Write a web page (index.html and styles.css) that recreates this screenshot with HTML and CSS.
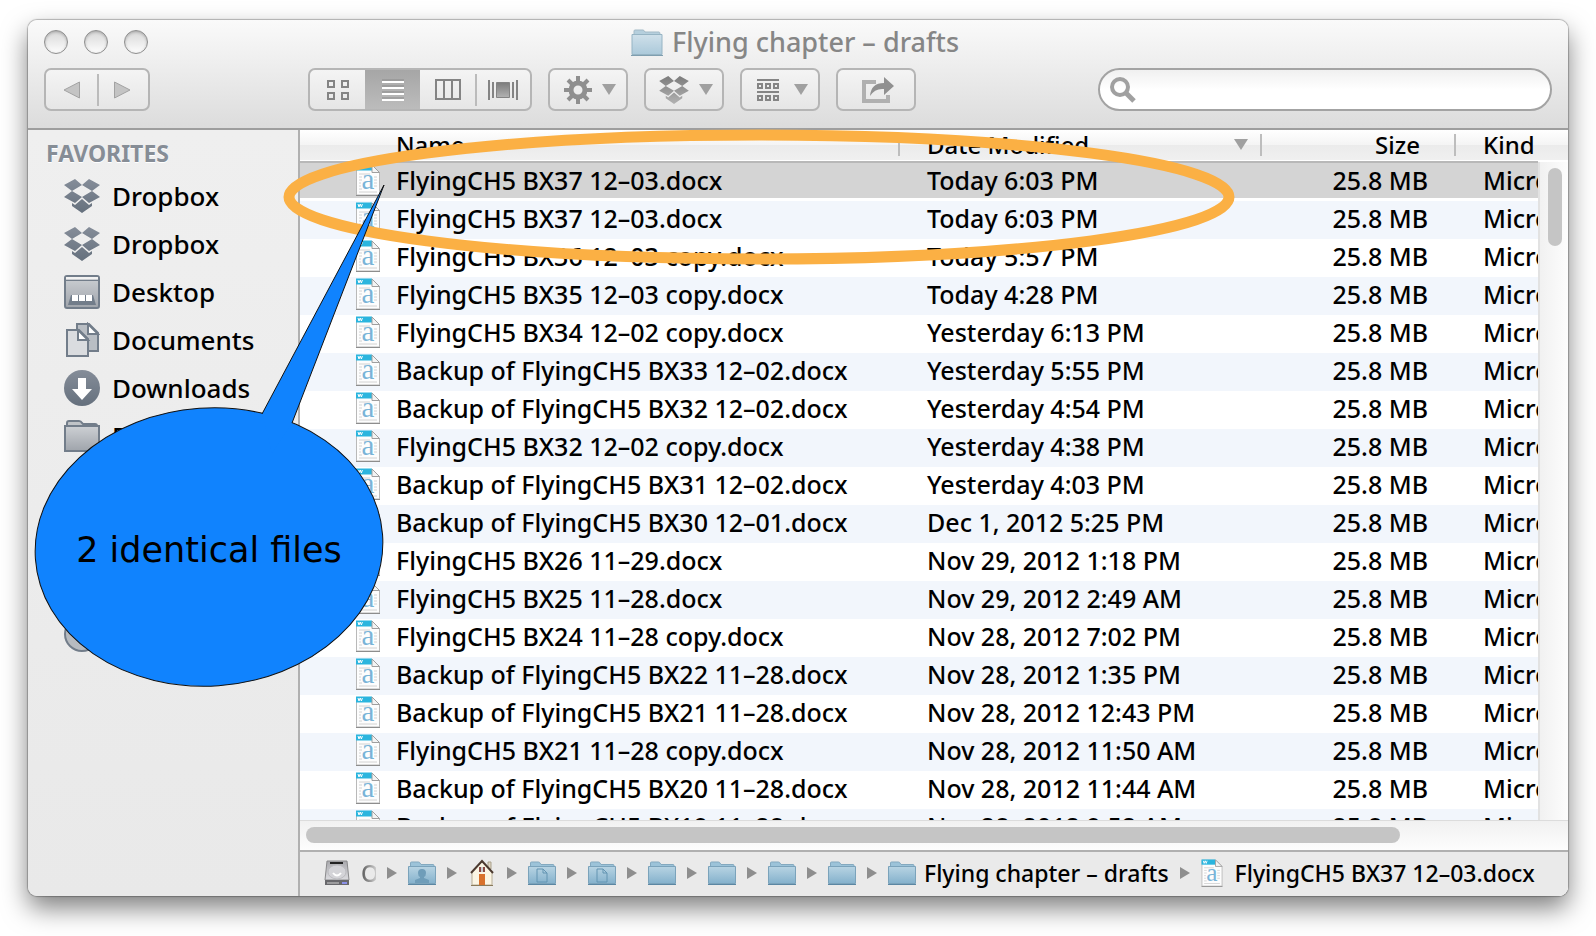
FILE: index.html
```html
<!DOCTYPE html>
<html lang="en">
<head>
    <meta charset="utf-8">
    <title>Flying chapter – drafts</title>
    <link rel="stylesheet" href="styles.css">
</head>
<body>
<svg class="defs" aria-hidden="true">
    <defs>
        <linearGradient id="g-folder" x1="0" y1="0" x2="0" y2="1">
            <stop offset="0" stop-color="#b8d4e3"/><stop offset="1" stop-color="#84b1cc"/>
        </linearGradient>
        <linearGradient id="g-pale" x1="0" y1="0" x2="0" y2="1">
            <stop offset="0" stop-color="#cfe0ea"/><stop offset="1" stop-color="#abc9da"/>
        </linearGradient>
        <linearGradient id="g-slate" x1="0" y1="0" x2="0" y2="1">
            <stop offset="0" stop-color="#858d99"/><stop offset="1" stop-color="#65707d"/>
        </linearGradient>
        <linearGradient id="g-silver" x1="0" y1="0" x2="0" y2="1">
            <stop offset="0" stop-color="#cdd0d4"/><stop offset="1" stop-color="#9fa4ab"/>
        </linearGradient>
        <linearGradient id="g-tool" x1="0" y1="0" x2="0" y2="1">
            <stop offset="0" stop-color="#7c7c7c"/><stop offset="1" stop-color="#b2b2b2"/>
        </linearGradient>
        <linearGradient id="g-disk" x1="0" y1="0" x2="0" y2="1">
            <stop offset="0" stop-color="#a9a9ad"/><stop offset="1" stop-color="#dcdce0"/>
        </linearGradient>
    </defs>
    <symbol id="doc" viewBox="0 0 24 32">
        <path d="M.5 1.500h16l7 7v22.500h-23z" fill="#fdfdfd" stroke="#b9b9b9"/>
        <path d="M0 31.500h24" stroke="#8d8d8d"/>
        <path d="M0 .5h16v6H0z" fill="#2bb5de"/>
        <path d="M2 2l1 3 1.200-3 1.200 3 1-3" fill="none" stroke="#fff"/>
        <path d="M16 1v7.500h7.500z" fill="#f4f4f4" stroke="#9f9f9f"/>
        <path d="M3 10h11M3 13h3M18 13h3M3 16h3M18 16h3M3 19h2M18 19h3M3 22h2M18 22h3M3 25h3M3 28h18" stroke="#d2d2d2"/>
        <text x="12" y="25" text-anchor="middle" class="doc-letter">a</text>
    </symbol>
    <symbol id="folder" viewBox="0 0 28 24">
        <path d="M2.500 6V2q0-1 1-1h7q1 0 1.500 1l1 1.500h12q1 0 1 1V7z" fill="#9cc3d9" stroke="#84a9bf"/>
        <path d="M.5 5.500h27v17h-27z" fill="url(#g-folder)" stroke="#7ba3bb"/>
        <path d="M0 23.500h28" stroke="#5b87a3"/>
    </symbol>
    <symbol id="dropbox" viewBox="0 0 36 34">
        <path d="M11 0L18 6 8 12 0 6zM25 0l11 6-8 6-10-6zM8 12l10 6-7 6-11-6zM28 12l8 6-11 6-7-6zM18 20l7 6 3-2v3l-10 7-10-7v-3l3 2z"/>
    </symbol>
    <symbol id="arrow" viewBox="0 0 10 12"><path d="M0 0l10 6-10 6z" fill="#8e8e8e"/></symbol>
    <symbol id="down" viewBox="0 0 14 11"><path d="M0 0h14L7 11z" fill="#a0a0a0"/></symbol>
</svg>

<div class="window">
    <header class="top">
        <div class="titlebar">
            <div class="lights">
                <button class="light" aria-label="Close"></button>
                <button class="light" aria-label="Minimize"></button>
                <button class="light" aria-label="Zoom"></button>
            </div>
            <h1 class="title"><svg class="title-icon" viewBox="0 0 32 27"><path d="M3 6V2q0-1 1-1h8q1 0 2 2h14q1 0 1 2v2z" fill="#b5cfdd" stroke="#a3bac7"/><path d="M1 5.500h30v20H1z" fill="url(#g-pale)" stroke="#96b4c4"/><path d="M0 26.500h32" stroke="#7f9eaf"/></svg>Flying chapter – drafts</h1>
        </div>
        <div class="toolbar">
            <div class="group nav">
                <button aria-label="Back"><svg width="17" height="18"><path d="M16.500 1v16L1 9z" fill="#c4c4c4" stroke="#a2a2a2"/></svg></button>
                <button aria-label="Forward"><svg width="17" height="18"><path d="M.5 1v16L16 9z" fill="#c4c4c4" stroke="#a2a2a2"/></svg></button>
            </div>
            <div class="group views">
                <button aria-label="Icon view"><svg width="24" height="22" fill="none" stroke="#848484" stroke-width="2"><path d="M2 2h6v6H2zM16 2h6v6h-6zM2 14h6v6H2zM16 14h6v6h-6z"/></svg></button>
                <button class="on" aria-label="List view"><svg width="24" height="22" stroke="#fff" stroke-width="2"><path d="M1 3h22M1 9h22M1 15h22M1 21h22"/><path d="M1 1h22M1 7h22M1 13h22M1 19h22" stroke="#8b8b8b" stroke-width="1"/></svg></button>
                <button aria-label="Column view"><svg width="28" height="22" fill="none" stroke="#848484" stroke-width="2"><path d="M2 1h24v19H2zM10 1v19M18 1v19"/></svg></button>
                <button aria-label="Cover Flow"><svg width="30" height="22"><path d="M1 1v20M5 3v16M25 3v16M29 1v20" stroke="#848484" stroke-width="2"/><path d="M8.500 3.500h13v15h-13z" fill="url(#g-tool)" stroke="#848484"/></svg></button>
            </div>
            <button class="tool" aria-label="Action">
                <svg width="28" height="28" viewBox="-14 -14 28 28" fill="none" stroke="#8f8f8f"><circle r="7" stroke-width="5"/><path d="M0-14V-8M0 8v6M-14 0h6M8 0h6M-10-10l4 4M6 6l4 4M-10 10l4-4M6-6l4-4" stroke-width="4"/></svg>
                <svg width="14" height="11"><use href="#down"/></svg>
            </button>
            <button class="tool" aria-label="Dropbox">
                <svg width="30" height="28" fill="url(#g-tool)"><use href="#dropbox"/></svg>
                <svg width="14" height="11"><use href="#down"/></svg>
            </button>
            <button class="tool arrange" aria-label="Arrange">
                <svg width="24" height="24" fill="none" stroke="#858585" stroke-width="2"><path d="M1 2h22M1 14h22"/><path d="M2 6h4v4H2zM10 6h4v4h-4zM18 6h4v4h-4zM2 18h4v4H2zM10 18h4v4h-4zM18 18h4v4h-4z"/></svg>
                <svg width="14" height="11"><use href="#down"/></svg>
            </button>
            <button class="tool share" aria-label="Share">
                <svg width="32" height="26"><path d="M14 5H2v19h24v-6" fill="none" stroke="#b0b0b0" stroke-width="4"/><path d="M22 0l10 9-10 9v-6q-9-1-14 7Q9 6 22 6z" fill="#909090"/></svg>
            </button>
            <label class="search">
                <svg width="26" height="26" fill="none" stroke="#a0a0a0"><circle cx="10" cy="10" r="8" stroke-width="4"/><path d="M16 16l8 8" stroke-width="5"/></svg>
                <input type="search" aria-label="Search">
            </label>
        </div>
    </header>

    <div class="content">
        <nav class="sidebar">
            <h2>FAVORITES</h2>
            <ul>
                <li><a href="#"><svg class="side-icon" fill="url(#g-slate)"><use href="#dropbox"/></svg>Dropbox</a></li>
                <li><a href="#"><svg class="side-icon" fill="url(#g-slate)"><use href="#dropbox"/></svg>Dropbox</a></li>
                <li><a href="#"><svg class="side-icon" viewBox="0 0 36 34"><rect x="1" y="1" width="34" height="32" rx="2" fill="url(#g-silver)" stroke="#727d8a" stroke-width="2"/><path d="M2 3h32" stroke="#f2f2f2" stroke-width="2"/><path d="M2 5.500h32" stroke="#727d8a"/><path d="M7 20h22l3 10H4z" fill="#727d8a"/><path d="M8 20h6v6H8zM15 20h6v6h-6zM22 20h6v6h-6z" fill="#fff"/></svg>Desktop</a></li>
                <li><a href="#"><svg class="side-icon" viewBox="0 0 36 34"><path d="M13 1h12l9 9v18H13z" fill="#b9bec4" stroke="#727d8a" stroke-width="2"/><path d="M24 1v10h10z" fill="#fff" stroke="#727d8a" stroke-width="2"/><path d="M3 7h12l9 9v17H3z" fill="#dadcdf" stroke="#727d8a" stroke-width="2"/><path d="M14 7v10h10z" fill="#fff" stroke="#727d8a" stroke-width="2"/></svg>Documents</a></li>
                <li><a href="#"><svg class="side-icon" viewBox="0 0 36 36"><circle cx="18" cy="18" r="18" fill="url(#g-slate)"/><path d="M14 8h8v11h6L18 30 8 19h6z" fill="#fff"/></svg>Downloads</a></li>
                <li><a href="#"><svg class="side-icon" viewBox="0 0 36 34"><path d="M3 8V4q0-2 2-2h10q2 0 3 2l1 1h12q2 0 2 2v3z" fill="#c0c4c8" stroke="#727d8a" stroke-width="2"/><path d="M1 7h34v25H1z" fill="url(#g-silver)" stroke="#727d8a" stroke-width="2"/></svg>P</a></li>
                <li class="disc"><svg class="side-icon" viewBox="0 0 36 36"><circle cx="18" cy="18" r="17" fill="#b7bbc0" stroke="#727d8a" stroke-width="2"/></svg></li>
            </ul>
        </nav>

        <main class="main">
            <div class="files">
                <div class="list">
                    <table>
                        <colgroup><col><col class="c-date"><col class="c-size"><col class="c-kind"></colgroup>
                        <thead>
                            <tr>
                                <th>Name</th>
                                <th><span class="sorted">Date Modified<svg width="14" height="11"><use href="#down"/></svg></span></th>
                                <th class="size">Size</th>
                                <th>Kind</th>
                            </tr>
                        </thead>
                        <tbody id="rows"></tbody>
                    </table>
                </div>
                <div class="vscroll"><div class="vthumb"></div></div>
            </div>
            <div class="hscroll"><div class="hthumb"></div></div>
            <footer class="path">
                <svg width="26" height="26"><path d="M3 1h20l2 19H1z" fill="url(#g-disk)" stroke="#8a8a8c"/><path d="M1 20h24v5H1z" fill="#68686c"/><path d="M3 23h12" stroke="#d0d0d0"/><path d="M18 23h5" stroke="#8a90e8" stroke-width="2"/><path d="M6 3h13" stroke="#222" stroke-width="2"/><ellipse cx="13" cy="12" rx="9" ry="7" fill="#d4d4d8" stroke="#bcbcc0"/><path d="M9 13q4 5 8 0" fill="none" stroke="#fff" stroke-width="2"/></svg>
                <span class="disk-name">O</span>
                <svg class="arrow"><use href="#arrow"/></svg>
                <svg class="crumb"><use href="#folder"/><path d="M14 8q4 0 4 4 0 3-2 4v1l5 2v3H7v-3l5-2v-1q-2-1-2-4 0-4 4-4z" fill="#6f9db9"/></svg>
                <svg class="arrow"><use href="#arrow"/></svg>
                <svg class="home" width="28" height="28"><path d="M20 3h3v7h-3z" fill="#ddd5c2" stroke="#aaa18c"/><path d="M4 13L14 3l10 10v13H4z" fill="#fbf5e4" stroke="#b8ae98"/><path d="M3 14L14 2l11 12" fill="none" stroke="#4b3a30" stroke-width="2"/><path d="M11 15h6v11h-6z" fill="#d8712c"/><path d="M11 8h6v5h-6z" fill="#8a4a44"/><path d="M13 8h2v5h-2z" fill="#c8ccd0"/><path d="M3 26.500h22" stroke="#8a7a5a"/></svg>
                <svg class="arrow"><use href="#arrow"/></svg>
                <svg class="crumb"><use href="#folder"/><path d="M9 8h6l4 4v9H9zM15 8v4h4" fill="none" stroke="#6394b2"/></svg>
                <svg class="arrow"><use href="#arrow"/></svg>
                <svg class="crumb"><use href="#folder"/><path d="M9 8h6l4 4v9H9zM15 8v4h4" fill="none" stroke="#6394b2"/></svg>
                <svg class="arrow"><use href="#arrow"/></svg>
                <svg class="crumb"><use href="#folder"/></svg>
                <svg class="arrow"><use href="#arrow"/></svg>
                <svg class="crumb"><use href="#folder"/></svg>
                <svg class="arrow"><use href="#arrow"/></svg>
                <svg class="crumb"><use href="#folder"/></svg>
                <svg class="arrow"><use href="#arrow"/></svg>
                <svg class="crumb"><use href="#folder"/></svg>
                <svg class="arrow"><use href="#arrow"/></svg>
                <span class="current"><svg class="crumb"><use href="#folder"/></svg>Flying chapter – drafts</span>
                <svg class="arrow"><use href="#arrow"/></svg>
                <span class="current current-file"><svg class="crumb-doc"><use href="#doc"/></svg>FlyingCH5 BX37 12–03.docx</span>
            </footer>
        </main>
    </div>
</div>

<!-- annotations drawn over the window -->
<svg class="notes">
    <ellipse cx="759" cy="197" rx="470" ry="62" fill="none" stroke="#fbb044" stroke-width="11"/>
    <ellipse cx="209" cy="547" rx="174" ry="139" fill="#1083fe" stroke="#111" transform="rotate(-4 209 547)"/>
    <path d="M262 414L384 185 292 423l-20 30z" fill="#1083fe"/>
    <path d="M262 414L384 185 292 423" fill="none" stroke="#111"/>
    <text x="209" y="562" text-anchor="middle" class="note-text">2 identical files</text>
</svg>

<script>
    var files = [
        ["FlyingCH5 BX37 12–03.docx", "Today 6:03 PM"],
        ["FlyingCH5 BX37 12–03.docx", "Today 6:03 PM"],
        ["FlyingCH5 BX36 12–03 copy.docx", "Today 5:57 PM"],
        ["FlyingCH5 BX35 12–03 copy.docx", "Today 4:28 PM"],
        ["FlyingCH5 BX34 12–02 copy.docx", "Yesterday 6:13 PM"],
        ["Backup of FlyingCH5 BX33 12–02.docx", "Yesterday 5:55 PM"],
        ["Backup of FlyingCH5 BX32 12–02.docx", "Yesterday 4:54 PM"],
        ["FlyingCH5 BX32 12–02 copy.docx", "Yesterday 4:38 PM"],
        ["Backup of FlyingCH5 BX31 12–02.docx", "Yesterday 4:03 PM"],
        ["Backup of FlyingCH5 BX30 12–01.docx", "Dec 1, 2012 5:25 PM"],
        ["FlyingCH5 BX26 11–29.docx", "Nov 29, 2012 1:18 PM"],
        ["FlyingCH5 BX25 11–28.docx", "Nov 29, 2012 2:49 AM"],
        ["FlyingCH5 BX24 11–28 copy.docx", "Nov 28, 2012 7:02 PM"],
        ["Backup of FlyingCH5 BX22 11–28.docx", "Nov 28, 2012 1:35 PM"],
        ["Backup of FlyingCH5 BX21 11–28.docx", "Nov 28, 2012 12:43 PM"],
        ["FlyingCH5 BX21 11–28 copy.docx", "Nov 28, 2012 11:50 AM"],
        ["Backup of FlyingCH5 BX20 11–28.docx", "Nov 28, 2012 11:44 AM"],
        ["Backup of FlyingCH5 BX19 11–28.docx", "Nov 28, 2012 9:52 AM"]
    ];
    var html = "";
    for (var i = 0; i < files.length; i++) {
        html += '<tr' + (i === 0 ? ' class="selected"' : '') + '>' +
            '<td><span class="file"><svg class="doc"><use href="#doc"/></svg>' + files[i][0] + '</span></td>' +
            '<td>' + files[i][1] + '</td><td class="size">25.8 MB</td><td>Microsoft</td></tr>';
    }
    document.getElementById("rows").innerHTML = html;
</script>
</body>
</html>
```
FILE: styles.css
```css
* {
    box-sizing: border-box;
}

body {
    margin: 0;
    height: 100vh;
    padding: 20px 28px 40px;
    background: #fff;
    color: #000;
    font-family: "Noto Sans", "Open Sans", sans-serif;
    font-size: 25px;
    font-weight: 500;
    overflow: hidden;
}

button {
    padding: 0;
    border: 0;
    background: none;
}

svg {
    display: block;
    flex: none;
}

.defs {
    position: absolute;
    width: 0;
    height: 0;
}

.window {
    height: 100%;
    display: flex;
    flex-direction: column;
    border-radius: 9px;
    overflow: hidden;
    background: #ececec;
    box-shadow: 0 0 1px 1px rgba(0, 0, 0, .25), 0 12px 26px rgba(0, 0, 0, .5);
}

/* title and toolbar */
.top {
    height: 110px;
    flex: none;
    background: linear-gradient(#fafafa, #dcdcdc);
    border-bottom: 2px solid #9e9e9e;
}

.titlebar {
    position: relative;
    height: 48px;
    display: flex;
    align-items: center;
    justify-content: center;
    padding: 0 6px 4px 0;
}

.lights {
    position: absolute;
    left: 16px;
    top: 10px;
    display: flex;
    gap: 16px;
}

.light {
    width: 24px;
    height: 24px;
    border: 1px solid #8e8e8e;
    border-radius: 50%;
    background: linear-gradient(#d8d8d8, #fdfdfd);
    box-shadow: inset 0 1px 3px rgba(0, 0, 0, .25);
}

.title {
    display: flex;
    align-items: center;
    gap: 9px;
    margin: 0;
    font-size: 27px;
    font-weight: 500;
    line-height: 36px;
    color: #868686;
}

.title-icon {
    width: 32px;
    height: 27px;
}

.toolbar {
    display: flex;
    gap: 16px;
    padding: 0 16px;
}

.group,
.tool {
    height: 43px;
    display: flex;
    align-items: center;
    border: 2px solid #b5b5b5;
    border-radius: 7px;
    background: linear-gradient(#f4f4f4, #e6e6e6);
}

.group button {
    flex: 1;
    height: 100%;
    display: flex;
    align-items: center;
    justify-content: center;
}

.nav {
    width: 106px;
    margin-right: 142px;
}

.views {
    width: 224px;
}

.group button + button:last-child {
    background: linear-gradient(#bbb, #bbb) 0 50% / 2px 32px no-repeat;
}

.views .on {
    background: linear-gradient(#a6a6a6, #bcbcbc);
}

.tool {
    width: 80px;
    justify-content: center;
    gap: 10px;
    padding-left: 4px;
}

.arrange {
    gap: 14px;
}

.search {
    flex: 1;
    max-width: 454px;
    height: 43px;
    margin-left: auto;
    display: flex;
    align-items: center;
    gap: 10px;
    padding: 0 16px 0 10px;
    border: 2px solid #a3a3a3;
    border-radius: 22px;
    background: linear-gradient(#f0f0f0, #fff 50%);
}

.search input {
    flex: 1;
    min-width: 0;
    border: 0;
    outline: 0;
    background: none;
    font: inherit;
}

.content {
    flex: 1;
    min-height: 0;
    display: flex;
}

/* sidebar */
.sidebar {
    width: 272px;
    flex: none;
    border-right: 2px solid #b0b0b0;
    background: linear-gradient(#efefef, #e9e9e9);
}

.sidebar h2 {
    margin: 0;
    padding: 6px 0 2px 18px;
    font-size: 23px;
    line-height: 34px;
    color: #868d96;
    text-shadow: 0 1px 0 #fff;
}

.sidebar ul {
    margin: 0;
    padding: 0 0 0 36px;
    list-style: none;
}

.sidebar a {
    height: 48px;
    display: flex;
    align-items: center;
    gap: 12px;
    font-size: 26px;
    color: #000;
    text-decoration: none;
}

.side-icon {
    width: 36px;
    height: 36px;
}

.disc {
    padding-top: 156px;
}

/* file list */
.main {
    flex: 1;
    min-width: 0;
    display: flex;
    flex-direction: column;
    background: #fff;
}

.files {
    flex: 1;
    min-height: 0;
    display: flex;
    background: linear-gradient(#fff, #f4f4f4 15px, #ebebeb 15px, #f0f0f0 30px) top / 100% 30px no-repeat;
}

.list {
    flex: 1;
    min-width: 0;
    overflow: hidden;
}

table {
    width: 100%;
    table-layout: fixed;
    border-collapse: collapse;
}

.c-date {
    width: 362px;
}

.c-size {
    width: 194px;
}

.c-kind {
    width: 84px;
}

th {
    height: 32px;
    padding: 0 0 2px 29px;
    border-bottom: 2px solid #b8b8b8;
    font-size: 24px;
    font-weight: 500;
    line-height: 28px;
    text-align: left;
    background: linear-gradient(#bdbdbd, #bdbdbd) 0 4px / 2px 22px no-repeat;
}

th:first-child {
    padding-left: 96px;
    background: none;
}

.sorted {
    display: flex;
    align-items: center;
    justify-content: space-between;
    padding-right: 12px;
}

td {
    height: 38px;
    padding: 0 0 4px 29px;
    line-height: 34px;
    white-space: nowrap;
    overflow: hidden;
}

td:first-child {
    padding-left: 56px;
}

th.size {
    padding-right: 34px;
    text-align: right;
}

td.size {
    padding-right: 26px;
    text-align: right;
}

tbody tr:nth-child(even) {
    background: #f2f6fc;
}

tbody .selected {
    background: linear-gradient(#d4d4d4, #d4d4d4) top / 100% 36px no-repeat;
}

.file {
    display: flex;
    align-items: center;
    gap: 16px;
}

.doc {
    width: 24px;
    height: 32px;
}

.doc-letter {
    font-family: "Liberation Serif", serif;
    font-size: 29px;
    font-weight: normal;
    fill: #79b4d8;
}

/* scroll bars */
.vscroll {
    width: 30px;
    margin-top: 32px;
    padding: 6px 6px 0 8px;
    border-left: 2px solid #e2e2e2;
    background: linear-gradient(90deg, #f1f1f1, #fdfdfd);
}

.vthumb {
    height: 78px;
    border-radius: 8px;
    background: #c5c5c5;
}

.hscroll {
    height: 32px;
    flex: none;
    padding: 6px 168px 6px 6px;
    border-top: 1px solid #dcdcdc;
    border-bottom: 2px solid #b0b0b0;
    background: linear-gradient(#f1f1f1, #fdfdfd);
}

.hthumb {
    height: 16px;
    border-radius: 8px;
    background: #c5c5c5;
}

/* path bar */
.path {
    height: 44px;
    flex: none;
    display: flex;
    align-items: center;
    gap: 11px;
    padding: 0 0 2px 24px;
    background: #eaeaea;
    font-size: 23px;
    line-height: 42px;
    white-space: nowrap;
}

.disk-name {
    width: 15px;
    color: transparent;
    background: linear-gradient(90deg, #555, #ccc);
    background-clip: text;
    -webkit-background-clip: text;
}

.current {
    display: flex;
    align-items: center;
    gap: 8px;
}

.current-file {
    gap: 12px;
}

.arrow {
    width: 10px;
    height: 12px;
}

.crumb {
    width: 28px;
    height: 24px;
}

.crumb-doc {
    width: 22px;
    height: 28px;
}

/* annotations */
.notes {
    position: absolute;
    left: 0;
    top: 0;
    width: 1596px;
    height: 936px;
    pointer-events: none;
}

.note-text {
    font-family: "DejaVu Sans", sans-serif;
    font-size: 35px;
    font-weight: normal;
}
```
